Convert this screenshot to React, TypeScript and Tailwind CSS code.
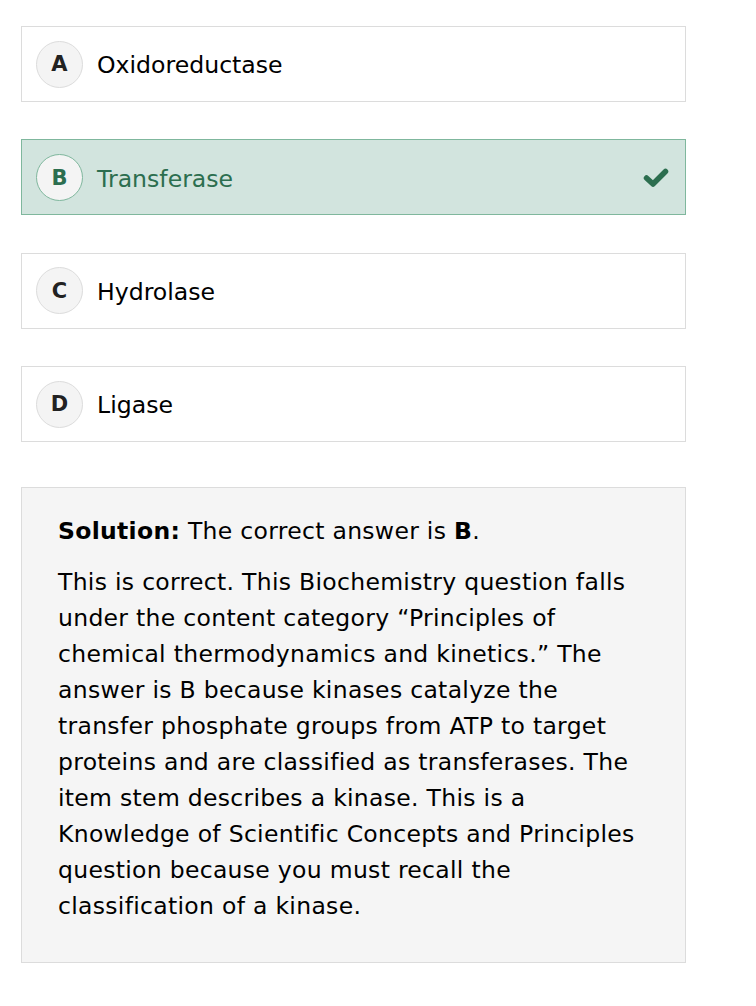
import React from "react";

const options = [
  { letter: "A", text: "Oxidoreductase", correct: false },
  { letter: "B", text: "Transferase", correct: true },
  { letter: "C", text: "Hydrolase", correct: false },
  { letter: "D", text: "Ligase", correct: false },
];

function Check() {
  return (
    <svg width="26" height="21" viewBox="0 0 26 21">
      <path d="M3.5 11 L10 17 L22.5 4.5" fill="none" stroke="#2c6e4f" strokeWidth="5.5" strokeLinecap="round" strokeLinejoin="round" />
    </svg>
  );
}

export default function App() {
  return (
    <div className="min-h-[1006px] bg-white pt-[26px] pl-[21px]" style={{ fontFamily: '"DejaVu Sans", Verdana, sans-serif' }}>
      <div className="w-[665px] flex flex-col gap-[37.4px]">
        {options.map((o) => (
          <div
            key={o.letter}
            className={
              o.correct
                ? "h-[76px] flex items-center pl-[14px] pr-[16px] border border-[#7fb79d] bg-[#d2e4de]"
                : "h-[76px] flex items-center pl-[14px] pr-[16px] border border-[#dcdcdc] bg-white"
            }
          >
            <div
              className={
                o.correct
                  ? "w-[47px] h-[47px] pt-[2px] rounded-full flex items-center justify-center bg-[#f4f4f4] border border-[#7fb79d] text-[21px] font-bold text-[#2c6e4f]"
                  : "w-[47px] h-[47px] pt-[2px] rounded-full flex items-center justify-center bg-[#f4f4f4] border border-[#dcdcdc] text-[21px] font-bold text-[#222222]"
              }
            >
              {o.letter}
            </div>
            <div className={o.correct ? "ml-[14px] pt-[4px] text-[23.6px] text-[#2c6e4f]" : "ml-[14px] pt-[4px] text-[23.6px] text-black"}>
              {o.text}
            </div>
            {o.correct && (
              <div className="ml-auto flex items-center">
                <Check />
              </div>
            )}
          </div>
        ))}
      </div>
      <div className="mt-[45px] w-[665px] h-[476px] border border-[#dcdcdc] bg-[#f5f5f5] pl-[36px] pr-[42px] pt-[25px] text-[23.5px] leading-[36px] tracking-[0.3px] text-black">
        <p>
          <span className="font-bold">Solution:</span> The correct answer is <span className="font-bold">B</span>.
        </p>
        <p className="mt-[15px]">
          This is correct. This Biochemistry question falls under the content category “Principles of chemical thermodynamics and kinetics.” The answer is B because kinases catalyze the transfer phosphate groups from ATP to target proteins and are classified as transferases. The item stem describes a kinase. This is a Knowledge of Scientific Concepts and Principles question because you must recall the classification of a kinase.
        </p>
      </div>
    </div>
  );
}
